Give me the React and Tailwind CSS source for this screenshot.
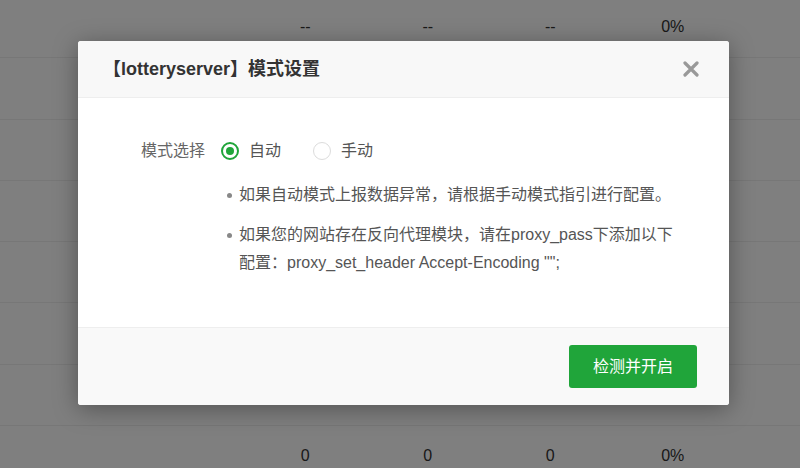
import React from "react";

const FONT = { fontFamily: '"Liberation Sans", "Noto Sans CJK SC", sans-serif' };

// rows 1-6 sit under the dialog, so only the first and last show values
const rows = [
  ["--", "--", "--", "0%"],
  [],
  [],
  [],
  [],
  [],
  [],
  ["0", "0", "0", "0%"],
];

function Radio({ checked, label }) {
  return (
    <label className="flex items-center gap-[10px]">
      {checked ? (
        <span className="flex h-[18px] w-[18px] items-center justify-center rounded-full border-2 border-[#20a53a] bg-white">
          <span className="h-[8px] w-[8px] rounded-full bg-[#20a53a]" />
        </span>
      ) : (
        <span className="h-[18px] w-[18px] rounded-full border border-[#dcdcdc] bg-white" />
      )}
      <span>{label}</span>
    </label>
  );
}

export default function App() {
  return (
    <div className="relative h-[468px] w-[800px] overflow-hidden bg-white" style={FONT}>
      {/* table behind the dialog */}
      <div className="mt-[-3px] flex flex-col">
        {rows.map((row, i) => (
          <div
            key={i}
            className="grid h-[61.3px] shrink-0 grid-cols-[244px_122.5px_122.5px_122.5px_122.5px_1fr] items-center border-b border-[#eee] text-[16px] text-[#333]"
          >
            <span />
            {[0, 1, 2, 3].map((j) => (
              <span key={j} className="text-center">
                {row[j] || ""}
              </span>
            ))}
            <span />
          </div>
        ))}
      </div>

      <div className="absolute inset-0 bg-black/50" />

      {/* dialog */}
      <div className="absolute left-[78px] top-[41px] w-[651px] overflow-hidden rounded-[3px] bg-white shadow-[0_4px_24px_rgba(0,0,0,0.35)]">
        <div className="flex h-[57px] items-center justify-between border-b border-[#eee] bg-[#f8f8f8] pl-[25px] pr-[30px]">
          <span className="text-[18px] font-bold text-[#333]">【lotteryserver】模式设置</span>
          <svg width="16" height="16" viewBox="0 0 16 16" className="text-[#999]">
            <path d="M2 2 L14 14 M14 2 L2 14" stroke="currentColor" strokeWidth="3.2" strokeLinecap="round" />
          </svg>
        </div>

        <div className="h-[229px] pt-[39px] text-[16px] text-[#555]">
          <div className="flex h-[28px] items-center pl-[63px]">
            <span className="mr-[16px] text-[#666]">模式选择</span>
            <div className="flex items-center gap-[32px]">
              <Radio checked label="自动" />
              <Radio label="手动" />
            </div>
          </div>
          <ul className="mt-[16px] flex flex-col gap-[12px] pl-[149px] pr-[46px]">
            <li className="flex leading-[28px]">
              <span className="mr-[7px] mt-[12px] h-[5px] w-[5px] shrink-0 rounded-full bg-[#888]" />
              <span>如果自动模式上报数据异常，请根据手动模式指引进行配置。</span>
            </li>
            <li className="flex leading-[28px]">
              <span className="mr-[7px] mt-[12px] h-[5px] w-[5px] shrink-0 rounded-full bg-[#888]" />
              <span>
                如果您的网站存在反向代理模块，请在proxy_pass下添加以下配置：proxy_set_header Accept-Encoding "";
              </span>
            </li>
          </ul>
        </div>

        <div className="flex h-[78px] items-center justify-end border-t border-[#eee] bg-[#f9f9f9] pr-[32px]">
          <button className="h-[43px] w-[128px] rounded-[3px] bg-[#20a53a] text-[16px] text-white">
            检测并开启
          </button>
        </div>
      </div>
    </div>
  );
}
